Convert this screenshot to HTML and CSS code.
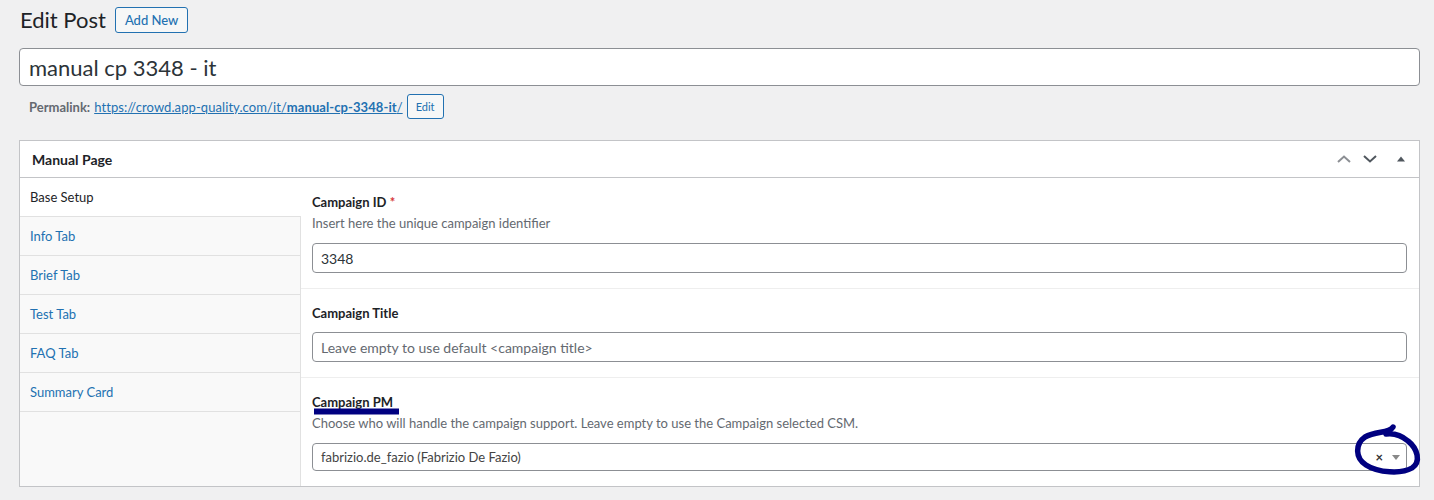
FILE: index.html
```html
<!DOCTYPE html>
<html lang="en">
<head>
<meta charset="utf-8">
<title>Edit Post</title>
<link rel="stylesheet" href="styles.css">
</head>
<body>
<div class="wrap">
  <div class="heading">
    <h1 class="page-title">Edit Post</h1>
    <a class="add-new" href="#">Add New</a>
  </div>
  <input class="post-title" type="text" value="manual cp 3348 - it">
  <div class="permalink">
    <strong class="perma-label">Permalink:</strong>
    <a class="perma-link" href="#">https://crowd.app-quality.com/it/<b>manual-cp-3348-it</b>/</a>
    <button class="edit-btn" type="button">Edit</button>
  </div>

  <div class="postbox">
    <div class="postbox-header">
      <h2 class="postbox-title">Manual Page</h2>
      <div class="handles">
        <span class="handle handle-up"><svg width="14" height="8" viewBox="0 0 14 8"><polyline points="1,7 7,1.5 13,7" fill="none" stroke="currentColor" stroke-width="2"/></svg></span>
        <span class="handle handle-down"><svg width="14" height="8" viewBox="0 0 14 8"><polyline points="1,1 7,6.5 13,1" fill="none" stroke="currentColor" stroke-width="2"/></svg></span>
        <span class="handle handle-toggle"><svg width="10" height="6" viewBox="0 0 10 6"><polygon points="1,5.5 5,0.5 9,5.5" fill="currentColor"/></svg></span>
      </div>
    </div>
    <div class="postbox-body">
      <ul class="tabs">
        <li class="tab active">Base Setup</li>
        <li class="tab">Info Tab</li>
        <li class="tab">Brief Tab</li>
        <li class="tab">Test Tab</li>
        <li class="tab">FAQ Tab</li>
        <li class="tab">Summary Card</li>
      </ul>
      <div class="fields">
        <div class="field">
          <label class="field-label">Campaign ID <span class="req">*</span></label>
          <p class="field-desc">Insert here the unique campaign identifier</p>
          <input class="text-input" type="text" value="3348">
        </div>
        <div class="field">
          <label class="field-label">Campaign Title</label>
          <input class="text-input" type="text" placeholder="Leave empty to use default <campaign title>">
        </div>
        <div class="field">
          <label class="field-label">Campaign PM</label>
          <p class="field-desc">Choose who will handle the campaign support. Leave empty to use the Campaign selected CSM.</p>
          <div class="select">
            <span class="select-value">fabrizio.de_fazio (Fabrizio De Fazio)</span>
            <span class="select-clear">×</span>
            <span class="select-arrow"></span>
          </div>
        </div>
      </div>
    </div>
  </div>
</div>

<svg class="annotations" width="1434" height="500" viewBox="0 0 1434 500">
  <path d="M314 411.5 L399 411.5" stroke="#000080" stroke-width="6" fill="none"/>
  <path d="M1393 427 C1390 433 1376 431 1365 437 C1355 444 1355 458 1366 465 C1378 473 1402 474 1412 468 C1421 462 1418 449 1408 441 C1401 435 1393 433 1386 434" stroke="#000080" stroke-width="5.5" fill="none" stroke-linecap="round" stroke-linejoin="round"/>
</svg>
</body>
</html>
```

FILE: styles.css
```css
* { box-sizing: border-box; }

html, body {
  margin: 0;
  padding: 0;
  background: #f0f0f1;
  font-family: Lato, "Liberation Sans", sans-serif;
  font-size: 13px;
  color: #3c434a;
}

body { position: relative; }

.wrap {
  padding: 0 14px 0 19px;
}

.heading {
  display: flex;
  align-items: center;
  gap: 9px;
  height: 26px;
  margin-top: 7px;
  padding-left: 1px;
}

.page-title {
  margin: 0;
  font-size: 22px;
  font-weight: 400;
  line-height: 26px;
  color: #1d2327;
}

.add-new {
  display: inline-flex;
  align-items: center;
  height: 26px;
  padding: 0 9px;
  border: 1px solid #2271b1;
  border-radius: 3px;
  background: #f6f7f7;
  color: #2271b1;
  font-size: 13px;
  font-weight: 500;
  text-decoration: none;
}

.post-title {
  display: block;
  width: 100%;
  height: 38px;
  margin: 15px 0 0;
  padding: 0 9px;
  border: 1px solid #8c8f94;
  border-radius: 4px;
  background: #fff;
  font-family: inherit;
  font-size: 22px;
  color: #2c3338;
  outline: none;
}

.permalink {
  display: flex;
  align-items: center;
  height: 25px;
  margin-top: 8px;
  padding-left: 10px;
  font-size: 13px;
  color: #646970;
}

.perma-label {
  font-weight: 700;
  margin-right: 4px;
}

.perma-link {
  color: #2271b1;
  text-decoration: underline;
  letter-spacing: 0.08px;
}

.perma-link b { font-weight: 700; }

.edit-btn {
  height: 25px;
  margin-left: 4px;
  padding: 0 8px;
  border: 1px solid #2271b1;
  border-radius: 3px;
  background: #f6f7f7;
  color: #2271b1;
  font-family: inherit;
  font-size: 11px;
}

.postbox {
  margin-top: 21px;
  border: 1px solid #c3c4c7;
  background: #fff;
}

.postbox-header {
  display: flex;
  align-items: center;
  justify-content: space-between;
  height: 37px;
  border-bottom: 1px solid #c3c4c7;
}

.postbox-title {
  margin: 0;
  padding-left: 12px;
  font-size: 14px;
  font-weight: 700;
  color: #1d2327;
}

.handles {
  display: flex;
  align-items: center;
  height: 100%;
}

.handle {
  display: flex;
  align-items: center;
  justify-content: center;
  width: 26px;
  height: 100%;
}

.handle-up { color: #8c8f94; }
.handle-down { color: #50575e; }
.handle-toggle { width: 36px; color: #50575e; }

.postbox-body {
  display: flex;
}

.tabs {
  list-style: none;
  margin: 0;
  padding: 0;
  width: 281px;
  flex: none;
  background: #f9f9f9;
  border-right: 1px solid #e1e1e1;
}

.tab {
  height: 39px;
  padding-left: 10px;
  line-height: 38px;
  border-bottom: 1px solid #e1e1e1;
  color: #2271b1;
  font-size: 13px;
}

.tab.active {
  background: #fff;
  color: #1d2327;
  margin-right: -1px;
}

.fields {
  flex: 1;
  min-width: 0;
}

.field {
  padding: 15px 12px 15px 11px;
  border-top: 1px solid #eeeeee;
}

.field:first-child { border-top: none; }

.field-label {
  display: block;
  height: 18px;
  line-height: 18px;
  font-size: 13px;
  font-weight: 700;
  color: #1d2327;
}

.req { color: #d63638; }

.field-desc {
  margin: 2px 0 0;
  height: 20px;
  line-height: 20px;
  font-size: 13px;
  color: #646970;
}

.text-input {
  display: block;
  width: 100%;
  height: 30px;
  margin-top: 10px;
  padding: 0 8px;
  border: 1px solid #8c8f94;
  border-radius: 4px;
  background: #fff;
  font-family: inherit;
  font-size: 14px;
  color: #2c3338;
  outline: none;
}

.text-input::placeholder { color: #646970; }

.select {
  display: flex;
  align-items: center;
  height: 28px;
  margin-top: 10px;
  padding-left: 8px;
  border: 1px solid #8c8f94;
  border-radius: 4px;
  background: #fff;
}

.select-value {
  flex: 1;
  font-size: 13px;
  color: #444;
}

.select-clear {
  font-size: 13px;
  font-weight: 700;
  color: #333;
  margin-right: 9px;
}

.select-arrow {
  width: 0;
  height: 0;
  margin-right: 6px;
  border-top: 5px solid #888;
  border-left: 4px solid transparent;
  border-right: 4px solid transparent;
}

.annotations {
  position: absolute;
  top: 0;
  left: 0;
  pointer-events: none;
}
```
